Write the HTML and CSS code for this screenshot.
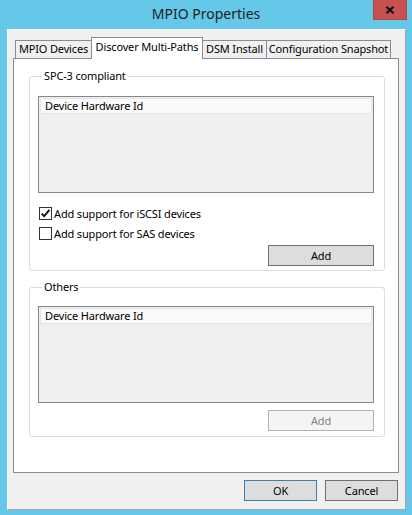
FILE: index.html
```html
<!DOCTYPE html>
<html>
<head>
<meta charset="utf-8">
<title>MPIO Properties</title>
<link rel="stylesheet" href="styles.css">
</head>
<body>
<div class="window">
  <div class="titlebar">
    <span></span>
    <span class="title">MPIO Properties</span>
    <span class="close"><svg width="10" height="8" viewBox="0 0 10 8"><path d="M1.5 0.8 L8.5 7.2 M8.5 0.8 L1.5 7.2" stroke="#111" stroke-width="2.2" fill="none"/></svg></span>
  </div>
  <div class="client">
    <div class="tabs">
      <div class="tab t1">MPIO Devices</div>
      <div class="tab sel t2">Discover Multi-Paths</div>
      <div class="tab t3">DSM Install</div>
      <div class="tab t4">Configuration Snapshot</div>
    </div>
    <div class="panel">
      <fieldset class="group g1">
        <legend>SPC-3 compliant</legend>
        <div class="listbox"><div class="lhead">Device Hardware Id</div></div>
        <div class="checks">
          <label class="check"><span class="box"><svg width="11" height="11" viewBox="0 0 11 11"><path d="M1.6 5.6 L4.2 8.2 L9.4 1.8" stroke="#111" stroke-width="1.9" fill="none"/></svg></span>Add support for iSCSI devices</label>
          <label class="check"><span class="box"></span>Add support for SAS devices</label>
        </div>
        <div class="btnrow"><button class="btn add">Add</button></div>
      </fieldset>
      <fieldset class="group g2">
        <legend>Others</legend>
        <div class="listbox"><div class="lhead">Device Hardware Id</div></div>
        <div class="btnrow"><button class="btn add disabled">Add</button></div>
      </fieldset>
    </div>
    <div class="footer">
      <button class="btn ok">OK</button>
      <button class="btn cancel">Cancel</button>
    </div>
  </div>
</div>
</body>
</html>
```
FILE: styles.css
```css
* { box-sizing: border-box; }
html, body { margin: 0; padding: 0; }
body {
  width: 412px;
  height: 515px;
  background: #65c8e8;
  font-family: "Noto Sans", "DejaVu Sans", sans-serif;
  font-size: 11px;
  letter-spacing: -0.15px;
  color: #000;
  overflow: hidden;
}
.window { width: 412px; height: 515px; display: flex; flex-direction: column; }
.titlebar {
  height: 29px;
  display: grid;
  grid-template-columns: 1fr auto 1fr;
  align-items: start;
}
.title {
  font-size: 14px;
  letter-spacing: 0;
  color: #1e1e1e;
  line-height: 20px;
  padding-top: 4px;
}
.close {
  justify-self: end;
  margin-right: 5px;
  width: 34px;
  height: 20px;
  background: #c75050;
  border: 1px solid #b34545;
  border-top: none;
  display: flex;
  align-items: center;
  justify-content: center;
}
.client {
  margin-left: 7px;
  width: 399px;
  height: 481px;
  background: #f0f0f0;
  border: 1px solid #a8a8a8;
  border-left-color: #fafafa;
  border-top-color: #fafafa;
  padding: 7px 0 0 5px;
  display: flex;
  flex-direction: column;
}
.tabs {
  display: flex;
  align-items: flex-end;
  height: 22px;
  margin-bottom: -1px;
  position: relative;
  z-index: 1;
}
.tab {
  height: 18px;
  margin-bottom: 1px;
  border: 1px solid #898c95;
  border-bottom: none;
  background: #f0f0f0;
  text-align: center;
  line-height: 16px;
  white-space: nowrap;
  overflow: hidden;
}
.tab.sel {
  height: 22px;
  margin-bottom: 0;
  background: #fff;
  line-height: 17px;
}
.t1 { margin-left: 2px; width: 77px; }
.t2 { margin-left: -1px; width: 112px; }
.t3 { margin-left: -1px; width: 65px; }
.t4 { margin-left: -1px; width: 125px; }
.panel {
  width: 386px;
  height: 415px;
  background: #fff;
  border: 1px solid #898c95;
  padding: 9px 13px 0 15px;
  display: flex;
  flex-direction: column;
}
.group {
  margin: 0;
  border: 1px solid #d5dfe5;
  border-radius: 3px;
  padding: 0 10px 4px 8px;
  min-width: 0;
}
.group legend {
  margin-left: 4px;
  padding: 0 2px;
  line-height: 16px;
}
.g1 { height: 203px; }
.g2 { margin-top: 8px; height: 158px; }
.listbox {
  margin-top: 12px;
  height: 97px;
  border: 1px solid #828790;
  background: #efefef;
  padding: 1px;
}
.g2 .listbox { margin-top: 11px; }
.lhead {
  height: 16px;
  background: #fafafa;
  border: 1px solid #e5e5e5;
  padding-left: 4px;
  line-height: 14px;
}
.checks {
  margin-top: 14px;
  display: flex;
  flex-direction: column;
  gap: 7px;
}
.check {
  display: flex;
  align-items: center;
  gap: 2px;
  height: 13px;
  margin-left: 1px;
  line-height: 13px;
}
.box {
  width: 13px;
  height: 13px;
  border: 1px solid #333;
  background: #fff;
  display: flex;
  align-items: center;
  justify-content: center;
  flex: none;
}
.btnrow {
  display: flex;
  justify-content: flex-end;
  margin-top: 5px;
}
.g1 .btnrow { margin-top: 5px; }
.g2 .btnrow { margin-top: 7px; }
.btn {
  font-family: inherit;
  font-size: 11px;
  letter-spacing: -0.15px;
  color: #000;
  background: #dddddd;
  border: 1px solid #707070;
  border-radius: 0;
  height: 21px;
  padding: 0;
  line-height: 17px;
}
.add { width: 106px; }
.add.disabled {
  background: #f4f4f4;
  border-color: #adb2b5;
  color: #838383;
}
.footer {
  display: flex;
  justify-content: flex-end;
  gap: 8px;
  margin-top: 7px;
  padding-right: 7px;
}
.ok, .cancel { width: 73px; }
.ok { border-color: #3c7fb1; }
```
